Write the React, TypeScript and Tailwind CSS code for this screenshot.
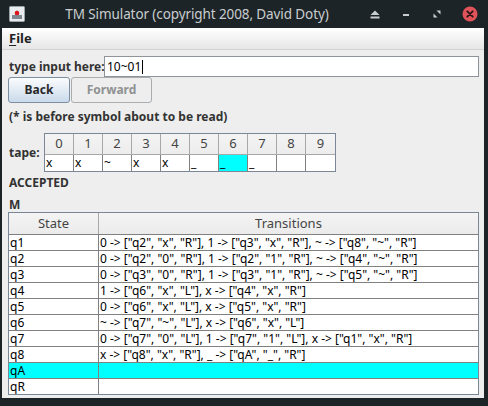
import React from 'react';

const tape = ['x', 'x', '~', 'x', 'x', '_', '_', '_', '', ''];
const headPos = 6;

const rows: [string, string][] = [
  ['q1', '0 -> ["q2", "x", "R"], 1 -> ["q3", "x", "R"], ~ -> ["q8", "~", "R"]'],
  ['q2', '0 -> ["q2", "0", "R"], 1 -> ["q2", "1", "R"], ~ -> ["q4", "~", "R"]'],
  ['q3', '0 -> ["q3", "0", "R"], 1 -> ["q3", "1", "R"], ~ -> ["q5", "~", "R"]'],
  ['q4', '1 -> ["q6", "x", "L"], x -> ["q4", "x", "R"]'],
  ['q5', '0 -> ["q6", "x", "L"], x -> ["q5", "x", "R"]'],
  ['q6', '~ -> ["q7", "~", "L"], x -> ["q6", "x", "L"]'],
  ['q7', '0 -> ["q7", "0", "L"], 1 -> ["q7", "1", "L"], x -> ["q1", "x", "R"]'],
  ['q8', 'x -> ["q8", "x", "R"], _ -> ["qA", "_", "R"]'],
  ['qA', ''],
  ['qR', ''],
];
const current = 'qA';

function TitleBar() {
  return (
    <div className="h-[28px] flex items-center text-[#c9cdcf] shrink-0">
      <div className="ml-[9px] w-[16px] h-[16px] shrink-0">
        <svg width="16" height="16" viewBox="0 0 16 16">
          <rect x="0.5" y="0.5" width="15" height="15" rx="1" fill="#e8ecef" stroke="#9aa3a8" />
          <rect x="3" y="9" width="10" height="4" fill="#7d8890" />
          <path d="M6 9 L8 4 L10 9 Z" fill="#55606a" />
          <circle cx="8" cy="7" r="2.3" fill="#e0141e" />
        </svg>
      </div>
      <div className="flex-1 text-center text-[13.5px] tracking-[-0.1px] whitespace-nowrap">
        TM Simulator (copyright 2008, David Doty)
      </div>
      <div className="flex items-center gap-[15px] shrink-0">
        <svg width="12" height="12" viewBox="0 0 12 12">
          <path d="M1.5 7 L6 2.5 L10.5 7 Z" fill="#c9cdcf" />
          <rect x="1.5" y="8.5" width="9" height="2" fill="#c9cdcf" />
        </svg>
        <svg className="ml-[4px]" width="12" height="12" viewBox="0 0 12 12">
          <rect x="3" y="6" width="6" height="2" fill="#c9cdcf" />
        </svg>
        <svg className="ml-[4px]" width="12" height="12" viewBox="0 0 12 12">
          <path d="M5.5 2.5 L9.5 2.5 L9.5 6.5 Z" fill="#c9cdcf" />
          <path d="M2.5 5.5 L2.5 9.5 L6.5 9.5 Z" fill="#c9cdcf" />
        </svg>
        <svg className="ml-[4px] mr-[10px]" width="16" height="16" viewBox="0 0 16 16">
          <circle cx="8" cy="8" r="7.5" fill="#e0535a" />
          <path d="M5.3 5.3 L10.7 10.7 M10.7 5.3 L5.3 10.7" stroke="#2a1416" strokeWidth="1.8" strokeLinecap="round" />
        </svg>
      </div>
    </div>
  );
}

export default function App() {
  return (
    <div className="w-[488px] h-[406px] bg-[#1d2427] flex flex-col overflow-hidden font-['Noto_Sans',sans-serif]">
      <TitleBar />
      <div className="flex-1 ml-[2px] mr-[4px] mb-[8px] bg-[#eeeeee] flex flex-col text-[12px] text-[#333333]">
        {/* menu */}
        <div className="h-[22px] bg-gradient-to-b from-[#ffffff] to-[#e6e6e6] border-b border-[#d4d4d4] flex items-center pl-[7px]">
          <span className="font-bold text-[13px] text-[#222]">
            <span className="underline underline-offset-2">F</span>ile
          </span>
        </div>

        <div className="pl-[6px] pr-[5px] flex flex-col">
          {/* input row */}
          <div className="mt-[6px] flex items-center h-[21px]">
            <span className="font-bold w-[96px] shrink-0 pl-[1px] whitespace-nowrap">type input here:</span>
            <div className="flex-1 h-[21px] bg-white border border-[#8e9499] flex items-center pl-[2px] text-black">
              10~01<span className="w-px h-[14px] bg-black ml-[1px]" />
            </div>
          </div>

          {/* buttons */}
          <div className="flex gap-px h-[26px]">
            <button className="w-[62px] h-full rounded-[3px] border border-[#7d8ea0] bg-gradient-to-b from-[#fbfcfd] to-[#c9daeb] font-bold text-[#2a2a2a]">
              Back
            </button>
            <button className="w-[81px] h-full rounded-[3px] border border-[#a9adb0] bg-[#eeeeee] font-bold text-[#8f9192]">
              Forward
            </button>
          </div>

          <div className="mt-[6px] h-[16px] leading-[16px] font-bold pl-[1px]">
            (* is before symbol about to be read)
          </div>

          {/* tape */}
          <div className="mt-[8px] flex items-center">
            <span className="font-bold w-[36px] pl-[1px]">tape:</span>
            <div className="border border-[#7a8796] bg-white">
              <div className="flex">
                {tape.map((_, i) => (
                  <div
                    key={i}
                    className={`w-[29px] h-[21px] flex items-center justify-center bg-gradient-to-b from-[#f4f4f4] to-[#ececec] border-b border-[#a8a8a8] text-[#444] text-[13px] ${i < 9 ? 'border-r' : ''}`}
                  >
                    {i}
                  </div>
                ))}
              </div>
              <div className="flex">
                {tape.map((s, i) => (
                  <div
                    key={i}
                    className={`w-[29px] h-[16px] leading-[16px] pl-px text-black border-[#808080] ${i < 9 ? 'border-r' : ''} ${i === headPos ? 'bg-[#00ffff]' : 'bg-white'}`}
                  >
                    {s}
                  </div>
                ))}
              </div>
            </div>
          </div>

          <div className="mt-[3px] h-[16px] leading-[16px] font-bold pl-[1px]">ACCEPTED</div>
          <div className="mt-[6px] h-[16px] leading-[16px] font-bold pl-[1px]">M</div>

          {/* transition table */}
          <div className="mt-[-1px] border border-[#7a8796] bg-white">
            <div className="flex h-[21px] bg-gradient-to-b from-[#f4f4f4] to-[#ebebeb] text-[#444] text-[13px]">
              <div className="w-[90px] flex items-center justify-center border-r border-[#a8a8a8]">State</div>
              <div className="flex-1 flex items-center justify-center">Transitions</div>
            </div>
            {rows.map(([q, t]) => (
              <div
                key={q}
                className={`flex h-[16px] leading-[15px] border-t border-[#808080] text-black ${q === current ? 'bg-[#00ffff]' : 'bg-white'}`}
              >
                <div className="w-[90px] pl-px border-r border-[#808080]">{q}</div>
                <div className="flex-1 pl-px whitespace-nowrap overflow-hidden">{t}</div>
              </div>
            ))}
          </div>
        </div>
      </div>
    </div>
  );
}
